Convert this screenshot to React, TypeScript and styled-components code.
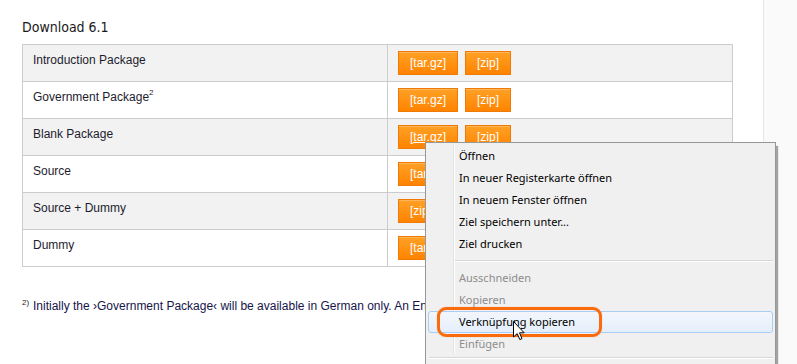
import styled, { createGlobalStyle } from 'styled-components'

const GlobalStyle = createGlobalStyle`
  html, body {
    margin: 0;
    padding: 0;
    background: #ffffff;
  }
  body {
    font-family: 'Liberation Sans', Arial, sans-serif;
  }
`

const Page = styled.div`
  position: relative;
  display: flex;
  width: 797px;
  height: 364px;
  overflow: hidden;
`

const Main = styled.div`
  width: 741px;
  padding: 19px 0 0 22px;
  background: #ffffff;
`

const Sidebar = styled.div`
  flex: 1;
  border-left: 1px solid #e6e6e6;
  background: #fafafa;
`

const Title = styled.h2`
  margin: 0 0 8px;
  font-family: 'DejaVu Sans Condensed', 'DejaVu Sans', sans-serif;
  font-weight: normal;
  font-size: 14px;
  line-height: 17px;
  color: #1a1a1a;
`

const Table = styled.table`
  width: 711px;
  border-collapse: collapse;
  font-size: 12px;
  color: #1c1c2e;
`

const Row = styled.tr<{ $shade?: boolean }>`
  background: ${p => (p.$shade ? '#f2f2f2' : '#ffffff')};
`

const NameCell = styled.td`
  width: 344px;
  border: 1px solid #cccccc;
  padding: 8px 10px 0;
  vertical-align: top;
  line-height: 14px;
`

const LinkCell = styled.td`
  border: 1px solid #cccccc;
  padding: 6px 10px;
  vertical-align: top;
`

const Buttons = styled.div`
  display: flex;
  gap: 7px;
`

const DownloadButton = styled.a<{ $hover?: boolean }>`
  display: block;
  height: 24px;
  box-sizing: border-box;
  padding: 0 11px;
  border: 1px solid #f07a06;
  box-shadow: inset 0 1px 0 #ffb45a;
  background: linear-gradient(#ffa126, #ff8300);
  color: #ffffff;
  font-size: 12px;
  line-height: 22px;
  text-decoration: ${p => (p.$hover ? 'underline' : 'none')};
  white-space: nowrap;
`

const Sup = styled.sup`
  font-size: 8px;
  line-height: 0;
  vertical-align: 6px;
`

const Footnote = styled.p`
  margin: 32px 0 0;
  font-size: 12px;
  line-height: 14px;
  color: #15154a;
  white-space: nowrap;
`

const FootMark = styled.sup`
  display: inline-block;
  width: 11px;
  font-size: 8px;
  line-height: 0;
  vertical-align: 5px;
  color: #1c1c2e;
`

const Menu = styled.div`
  position: absolute;
  left: 425px;
  top: 142px;
  width: 351px;
  box-sizing: border-box;
  padding: 2px 0;
  border: 1px solid #979797;
  background: #f0f0f0;
  box-shadow: 3px 3px 1px -1px rgba(0, 0, 0, 0.35);
  font-family: 'Noto Sans', 'Open Sans', sans-serif;
  font-size: 11px;
`

const Gutter = styled.div`
  position: absolute;
  left: 27px;
  top: 2px;
  bottom: 10px;
  width: 1px;
  border-right: 1px solid #ffffff;
  background: #e2e3e3;
`

const Item = styled.div<{ $disabled?: boolean; $active?: boolean }>`
  position: relative;
  height: 22px;
  box-sizing: border-box;
  margin: 0 2px;
  padding-left: 30px;
  border: 1px solid ${p => (p.$active ? '#a9cdf3' : 'transparent')};
  border-radius: 3px;
  background: ${p => (p.$active ? 'linear-gradient(#f3f7fc, #e4eefa)' : 'transparent')};
  color: ${p => (p.$disabled ? '#8d8d8d' : '#000000')};
  line-height: 20px;
  white-space: nowrap;
`

const Separator = styled.div<{ $full?: boolean }>`
  height: 1px;
  margin: ${p => (p.$full ? '2px 2px 3px 3px' : '5px 2px 5px 29px')};
  border-bottom: 1px solid #ffffff;
  background: #d7d7d7;
`

const Highlight = styled.div`
  position: absolute;
  left: 437px;
  top: 307px;
  width: 165px;
  height: 30px;
  box-sizing: border-box;
  border: 3px solid #f96b0c;
  border-radius: 9px;
  box-shadow: 0 0 1px rgba(249, 107, 12, 0.6);
`

const Pointer = styled.svg`
  position: absolute;
  left: 513px;
  top: 321px;
`

const packages = [
  { name: 'Introduction Package', files: ['[tar.gz]', '[zip]'] },
  { name: 'Government Package', note: '2', files: ['[tar.gz]', '[zip]'] },
  { name: 'Blank Package', files: ['[tar.gz]', '[zip]'], hover: 0 },
  { name: 'Source', files: ['[tar.gz]', '[zip]'] },
  { name: 'Source + Dummy', files: ['[zip]', '[tar.gz]'] },
  { name: 'Dummy', files: ['[tar.gz]', '[zip]'] },
]

const menuItems = [
  { label: 'Öffnen' },
  { label: 'In neuer Registerkarte öffnen' },
  { label: 'In neuem Fenster öffnen' },
  { label: 'Ziel speichern unter...' },
  { label: 'Ziel drucken', sep: true },
  { label: 'Ausschneiden', disabled: true },
  { label: 'Kopieren', disabled: true },
  { label: 'Verknüpfung kopieren', active: true },
  { label: 'Einfügen', disabled: true, full: true },
]

export default function App() {
  return (
    <>
      <GlobalStyle />
      <Page>
        <Main>
          <Title>Download 6.1</Title>
          <Table>
            <tbody>
              {packages.map((p, i) => (
                <Row key={p.name} $shade={i % 2 === 0}>
                  <NameCell>
                    {p.name}
                    {p.note && <Sup>{p.note}</Sup>}
                  </NameCell>
                  <LinkCell>
                    <Buttons>
                      {p.files.map((f, j) => (
                        <DownloadButton key={f} href="#" $hover={p.hover === j}>
                          {f}
                        </DownloadButton>
                      ))}
                    </Buttons>
                  </LinkCell>
                </Row>
              ))}
            </tbody>
          </Table>
          <Footnote>
            <FootMark>2)</FootMark>
            Initially the ›Government Package‹ will be available in German only. An English version will follow.
          </Footnote>
        </Main>
        <Sidebar />

        <Menu>
          <Gutter />
          {menuItems.map(m => (
            <div key={m.label}>
              <Item $disabled={m.disabled} $active={m.active}>{m.label}</Item>
              {m.sep && <Separator />}
              {m.full && <Separator $full />}
            </div>
          ))}
        </Menu>

        <Highlight />
        <Pointer width="13" height="20" viewBox="0 0 13 20">
          <path
            d="M0.5 0.5 L0.5 16 L4.2 12.6 L6.8 18.6 L9 17.6 L6.5 11.8 L11.2 11.8 Z"
            fill="#ffffff"
            stroke="#000000"
            strokeWidth="1"
            strokeLinejoin="round"
          />
        </Pointer>
      </Page>
    </>
  )
}
